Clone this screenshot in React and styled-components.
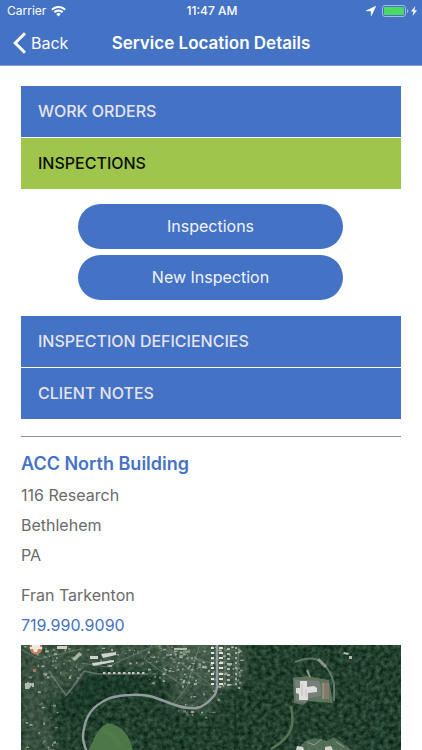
import React, { useState } from "react";
import styled, { createGlobalStyle } from "styled-components";

const GlobalStyle = createGlobalStyle`
  * {
    box-sizing: border-box;
  }
  body {
    margin: 0;
    background: #fff;
    font-family: Inter, "Liberation Sans", sans-serif;
    -webkit-font-smoothing: antialiased;
  }
`;

const Screen = styled.div`
  display: flex;
  flex-direction: column;
  min-height: 100vh;
`;

const Header = styled.header`
  background: #4472c5;
  color: #fff;
  border-bottom: 1px solid #7f9fd8;
`;

const StatusBar = styled.div`
  display: grid;
  grid-template-columns: 1fr auto 1fr;
  align-items: center;
  height: 22px;
  padding: 0 5px 0 7px;
  font-size: 12px;
  line-height: 22px;
`;

const Carrier = styled.div`
  display: flex;
  align-items: center;
  gap: 5px;
`;

const Clock = styled.div`
  font-weight: 500;
`;

const StatusIcons = styled.div`
  display: flex;
  align-items: center;
  justify-content: flex-end;
  gap: 6px;
`;

const Battery = styled.div`
  display: flex;
  align-items: center;
  gap: 2px;
`;

const NavBar = styled.nav`
  display: grid;
  grid-template-columns: 1fr auto 1fr;
  align-items: center;
  height: 43px;
  padding: 0 13px 2px;
`;

const BackButton = styled.button`
  display: flex;
  align-items: center;
  justify-self: start;
  gap: 4px;
  padding: 0;
  border: 0;
  background: none;
  color: #fff;
  font: inherit;
  font-size: 16px;
  line-height: 24px;
  cursor: pointer;
`;

const Title = styled.h1`
  margin: 0;
  font-size: 17px;
  line-height: 24px;
  font-weight: 600;
`;

const Content = styled.main`
  display: flex;
  flex: 1;
  flex-direction: column;
  padding: 20px 21px 0;
`;

const Accordion = styled.section`
  display: flex;
  flex-direction: column;
  gap: 1px;
`;

const AccordionHeader = styled.button`
  height: 51px;
  padding: 0 17px 2px;
  border: 0;
  background: ${({ $open }) => ($open ? "#9fc54d" : "#4472c5")};
  color: ${({ $open }) => ($open ? "#0b1004" : "#e6e4ee")};
  font: inherit;
  font-size: 16px;
  font-weight: 500;
  text-align: left;
  text-transform: uppercase;
  cursor: pointer;
`;

const AccordionBody = styled.div`
  display: flex;
  flex-direction: column;
  gap: 6px;
  padding: 14px 58px 15px 57px;
`;

const PillButton = styled.button`
  height: 45px;
  padding: 0 0 2px;
  border: 0;
  border-radius: 23px;
  background: #4472c5;
  color: #f1f4fb;
  font: inherit;
  font-size: 16px;
  cursor: pointer;
`;

const Divider = styled.hr`
  width: 100%;
  height: 1px;
  margin: 17px 0 12px;
  border: 0;
  background: #8f8f8f;
`;

const SiteName = styled.h2`
  margin: 0 0 1px;
  color: #4472c5;
  font-size: 18px;
  line-height: 30px;
  font-weight: 600;
`;

const Address = styled.address`
  margin-bottom: 10px;
  color: #6a6a6a;
  font-size: 16px;
  font-style: normal;
  line-height: 30px;
`;

const Contact = styled.div`
  display: flex;
  flex-direction: column;
  align-items: flex-start;
  margin-bottom: 5px;
  color: #6a6a6a;
  font-size: 16px;
  line-height: 30px;
`;

const PhoneLink = styled.a`
  color: #4472c5;
  text-decoration: none;
`;

const MapFrame = styled.div`
  flex: 1;
  display: flex;
  min-height: 105px;
  background: #23432f;
`;

const MapSvg = styled.svg`
  flex: 1;
  min-width: 0;
  height: auto;
`;

const WifiIcon = () => (
  <svg width="15" height="11" viewBox="0 0 15 11" fill="#fff" aria-hidden="true">
    <path d="M7.500 0C4.700 0 2.100 1.100.2 2.900l1.400 1.500C3.200 2.900 5.200 2 7.500 2s4.300.9 5.900 2.400l1.400-1.500C12.900 1.100 10.300 0 7.500 0z" />
    <path d="M7.500 3.600c-1.800 0-3.500.7-4.800 1.900l1.400 1.500c.9-.8 2.100-1.300 3.400-1.300s2.500.5 3.400 1.300l1.400-1.500C11 4.300 9.300 3.600 7.500 3.600z" />
    <path d="M7.500 7.100c-.9 0-1.700.4-2.300.9l2.300 2.500L9.800 8c-.6-.5-1.400-.9-2.300-.9z" />
  </svg>
);

const LocationIcon = () => (
  <svg width="10" height="10" viewBox="0 0 10 10" fill="#fff" aria-hidden="true">
    <path d="M9.900.1L0 4.800l5 .3.300 4.800z" stroke="#fff" strokeWidth=".4" />
  </svg>
);

const BatteryIcon = () => (
  <svg width="27" height="12" viewBox="0 0 27 12" aria-hidden="true">
    <rect x=".5" y=".5" width="23" height="11" rx="2.500" fill="none" stroke="#a5bbe3" />
    <rect x="2" y="2" width="20" height="8" rx="1" fill="#4cd964" />
    <path d="M25 4v4c.8-.3 1.300-1.100 1.300-2S25.800 4.300 25 4z" fill="#a5bbe3" />
  </svg>
);

const BoltIcon = () => (
  <svg width="6" height="10" viewBox="0 0 6 10" fill="#fff" aria-hidden="true">
    <path d="M4.300 0L0 5.600h2.500L1.600 10 6 4.200H3.400z" />
  </svg>
);

const ChevronIcon = () => (
  <svg width="14" height="22" viewBox="0 0 14 22" fill="none" aria-hidden="true">
    <path d="M12 1.300L2.200 11l9.800 9.700" stroke="#fff" strokeWidth="3" />
  </svg>
);

// small repeatable generator so the rooftops land in the same spots on every render
const scatter = (seed, count, [x, y, w, h]) => {
  let s = seed;
  const next = () => {
    s = (s * 16807) % 2147483647;
    return s / 2147483647;
  };
  next();
  return Array.from({ length: count }, () => ({
    x: x + next() * w,
    y: y + next() * h,
    w: 1 + next() * 2.4,
    h: 0.8 + next() * 1.6,
    light: next(),
  }));
};

const roofs = [
  ...scatter(11, 60, [2, 0, 58, 32]),
  ...scatter(23, 22, [2, 34, 34, 70]),
  ...scatter(37, 36, [66, 0, 60, 20]),
  ...scatter(53, 150, [126, 0, 70, 38]),
  ...scatter(71, 50, [196, 0, 24, 42]),
  ...scatter(97, 34, [152, 38, 48, 36]),
  ...scatter(131, 14, [2, 96, 34, 9]),
];

const rowHouses = [82, 87, 92, 97, 102, 107, 111, 116, 121];
const streetHouses = [2, 7, 12, 17, 22, 28, 33, 38];

const AerialMap = () => (
  <MapSvg viewBox="0 0 380 105" preserveAspectRatio="xMidYMin slice" role="img" aria-label="Aerial map">
    <defs>
      <filter id="canopy" x="0" y="0" width="100%" height="100%" colorInterpolationFilters="sRGB">
        <feTurbulence type="fractalNoise" baseFrequency="0.22" numOctaves="3" seed="8" />
        <feColorMatrix
          values="0.30 0 0 0 -0.020
                  0.36 0 0 0 0.070
                  0.30 0 0 0 0.025
                  0 0 0 0 1"
        />
      </filter>
      <filter id="soft" x="-20%" y="-20%" width="140%" height="140%">
        <feGaussianBlur stdDeviation="5" />
      </filter>
      <filter id="edge" x="-5%" y="-5%" width="110%" height="110%">
        <feGaussianBlur stdDeviation="0.4" />
      </filter>
    </defs>
    <rect width="380" height="105" fill="#23432f" />
    <rect width="380" height="105" filter="url(#canopy)" />

    <g filter="url(#soft)" opacity="0.3">
      <path d="M0-5h225v42l-22 8-15 25-38-8 2-20-20-18-60-4-20 20L26 56l10 50H0z" fill="#747f70" />
      <path d="M126-5h92v42h-60z" fill="#929789" />
      <path d="M62 28l60 4 30 24-36-8-36 6-22 20-18-18z" fill="#102e20" />
    </g>

    <g filter="url(#edge)">
      <path d="M71 98q6-16 16-20 10 2 16 8 7 8 9 20H67z" fill="#4d7748" />
      <path d="M81 85q12 3 18 18" fill="none" stroke="#5a8050" strokeWidth="5" opacity="0.4" />

      <g fill="none" stroke="#7c8781" opacity="0.7">
        <path d="M28 26l13 19 4 5q12-14 18-24l14 3h50" strokeWidth="1.500" />
        <path d="M45 51q8-8 11-16" strokeWidth="1" />
        <path d="M131 0l-8 14 14 10 26 17M146 0l14 18 33 24M162 0l5 12 28 7M178 2l-12 40-14 17" strokeWidth="1" />
        <path d="M0 4l18 10 42-10M60 18l26 4 42-19" strokeWidth="1" />
        <path d="M204 0v39M218 3l-3 37h-19" strokeWidth="1" />
      </g>

      {roofs.map((roof, i) => (
        <rect
          key={i}
          x={roof.x}
          y={roof.y}
          width={roof.w}
          height={roof.h}
          fill={roof.light > 0.6 ? "#c3c7c0" : roof.light > 0.3 ? "#8e988d" : "#566d52"}
          opacity="0.75"
        />
      ))}
      {rowHouses.map((x) => (
        <rect key={x} x={x} y="27" width="2.500" height="2" fill="#c9c7bd" />
      ))}
      {streetHouses.map((y) => (
        <g key={y} fill="#e3e3de">
          <rect x="190" y={y} width="3" height="2" />
          <rect x="198" y={y} width="4" height="2" />
          <rect x="206" y={y + 1} width="3" height="2" fill="#b5baaf" />
          <rect x="214" y={y} width="2" height="2" fill="#a4aca0" />
        </g>
      ))}

      <path d="M51 14l7-7 3 2-7 7z" fill="#a4b6a0" />
      <path d="M36 1h10v3H36zM69 11h8v3h-8zM80 9l15-2v3l-13 3zM71 18l22-3v2l-21 4z" fill="#d0d3cb" />
      <path d="M4 38h9v4h-2v-2l-3 4H4zM153 3h13v2h-13z" fill="#b5bbb4" />
      <path d="M12 24h3v3h-3z" fill="#b1705d" />

      <path
        d="M66 107Q60 94 63 84q2-13 10-21 8-7 16-10 11-3 20-3 15-1 26 3l19 7q12 4 22 3 8-2 15-10 5-4 5-13V0"
        fill="none"
        stroke="#929ca0"
        strokeWidth="2.400"
      />
      <path d="M214 60v45" stroke="#142b1c" strokeWidth="1" />

      <path d="M274 17q18-7 26 0 10 8 13 22v17" fill="none" stroke="#607865" strokeWidth="2" />
      <path d="M297 14l8 8" stroke="#8c958a" strokeWidth="3" />
      <path d="M270 61q3 15 0 23-4 11-20 20" fill="none" stroke="#557557" strokeWidth="2.500" />
      <path d="M272 33l14-2 22 4 4 23-15-1-10-1-5 4-9-2z" fill="#5d745b" />
      <path d="M274 35h8l16 1 2 6v9l-12 2-4 5-9-2z" fill="#777f7c" />
      <path d="M286 25l3 7" stroke="#8d958a" strokeWidth="2" />
      <path d="M279 36h7v6l7-1 3 2v4l-9 1v7h-9v-6l-3-1v-5h4z" fill="#e0dedb" />
      <path d="M281 39v12M285 44v8" stroke="#aaa8a5" strokeWidth="0.600" />
      <path d="M302 38h6v16h-6z" fill="#85796d" />
      <path d="M302 38v16" stroke="#b9b2a6" strokeWidth="0.800" />
      <path d="M323 7l5 1-1 2-5-1zM328 11h3v3h-3z" fill="#b0b8ac" />

      <path d="M276 105l8-9 10-3 12 3 7-4 8 6 10 7z" fill="#5c7860" opacity="0.8" />
      <path d="M276 101l6 1 1 3h-8zM304 102l6-1 2 4h-8z" fill="#d4d6cf" />
      <path d="M286 97l7 3 8-6M315 97l8 5" fill="none" stroke="#93a08f" />
    </g>

    <circle cx="15" cy="3" r="6.500" fill="#c58260" />
    <path d="M11 0h8v2h2v2h-4l-1 3h-3l-1-3H9V2h2z" fill="#f2e8dd" />
  </MapSvg>
);

const App = () => {
  const [open, setOpen] = useState("inspections");
  const toggle = (name) => setOpen(open === name ? null : name);

  return (
    <>
      <GlobalStyle />
      <Screen>
        <Header>
          <StatusBar>
            <Carrier>
              Carrier
              <WifiIcon />
            </Carrier>
            <Clock>11:47 AM</Clock>
            <StatusIcons>
              <LocationIcon />
              <Battery>
                <BatteryIcon />
                <BoltIcon />
              </Battery>
            </StatusIcons>
          </StatusBar>
          <NavBar>
            <BackButton type="button">
              <ChevronIcon />
              Back
            </BackButton>
            <Title>Service Location Details</Title>
          </NavBar>
        </Header>
        <Content>
          <Accordion>
            <AccordionHeader type="button" $open={open === "orders"} onClick={() => toggle("orders")}>
              Work Orders
            </AccordionHeader>
            <AccordionHeader
              type="button"
              aria-expanded={open === "inspections"}
              $open={open === "inspections"}
              onClick={() => toggle("inspections")}>
              Inspections
            </AccordionHeader>
            {open === "inspections" && (
              <AccordionBody>
                <PillButton type="button">Inspections</PillButton>
                <PillButton type="button">New Inspection</PillButton>
              </AccordionBody>
            )}
            <AccordionHeader type="button" $open={open === "deficiencies"} onClick={() => toggle("deficiencies")}>
              Inspection Deficiencies
            </AccordionHeader>
            <AccordionHeader type="button" $open={open === "notes"} onClick={() => toggle("notes")}>
              Client Notes
            </AccordionHeader>
          </Accordion>
          <Divider />
          <SiteName>ACC North Building</SiteName>
          <Address>
            <div>116 Research</div>
            <div>Bethlehem</div>
            <div>PA</div>
          </Address>
          <Contact>
            <span>Fran Tarkenton</span>
            <PhoneLink href="tel:7199909090">719.990.9090</PhoneLink>
          </Contact>
          <MapFrame>
            <AerialMap />
          </MapFrame>
        </Content>
      </Screen>
    </>
  );
};

export default App;
